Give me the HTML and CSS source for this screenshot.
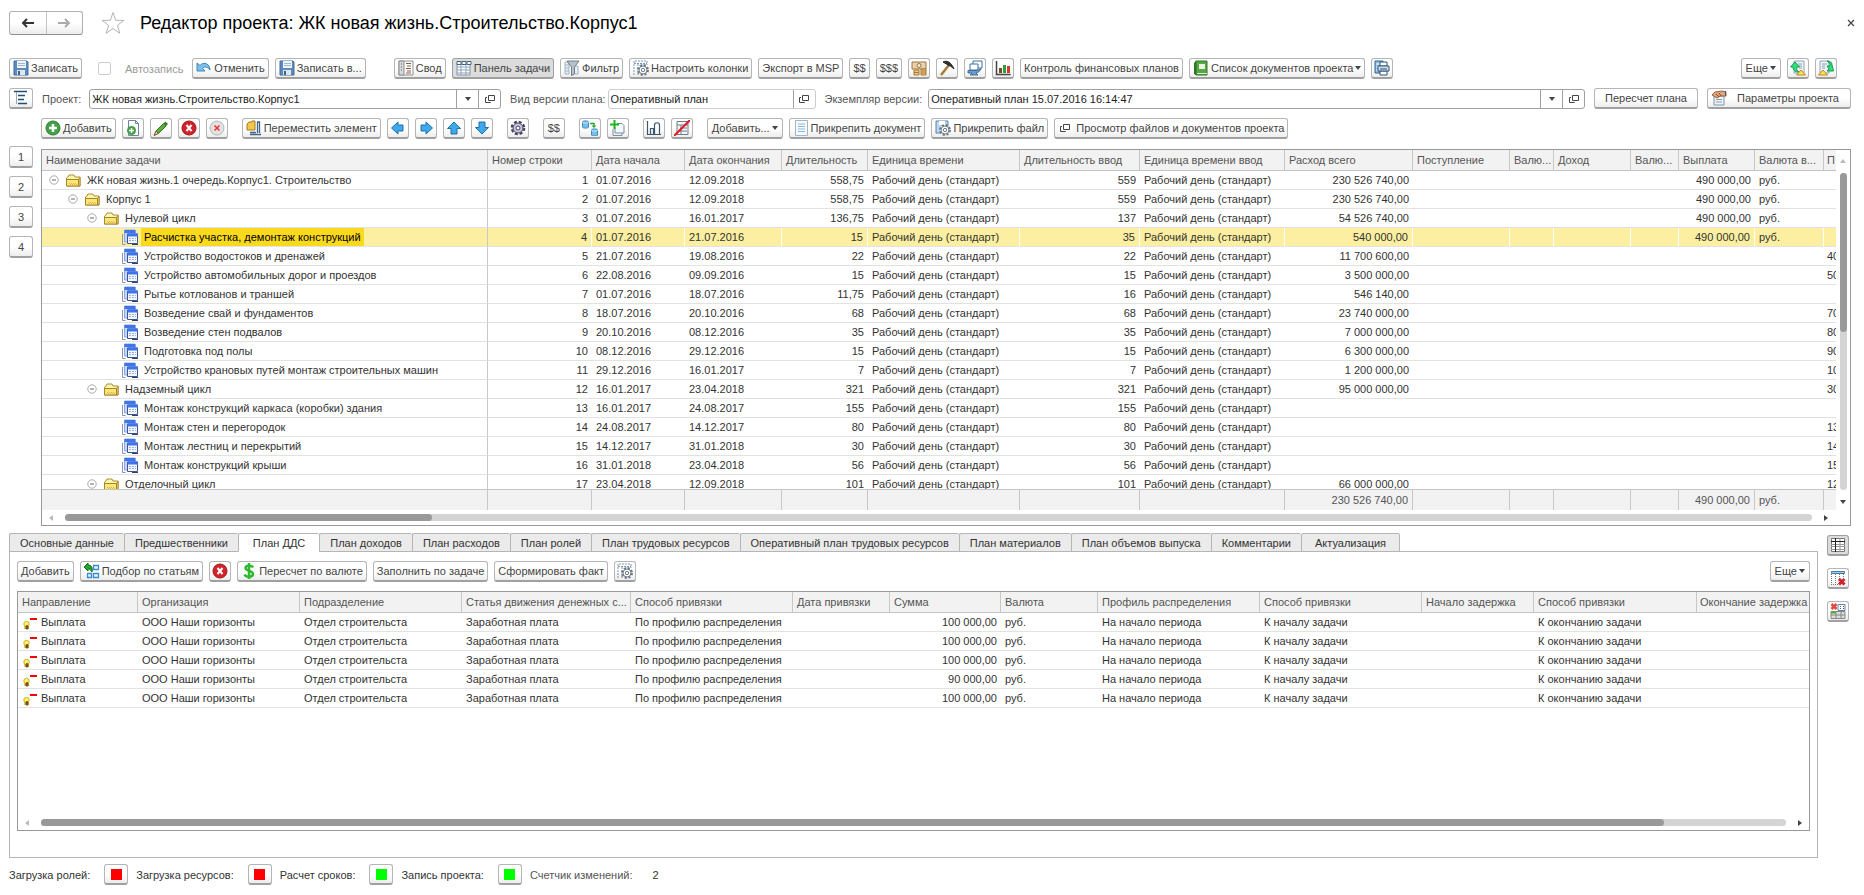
FILE: index.html
```html
<!DOCTYPE html>
<html lang="ru">
<head>
<meta charset="utf-8">
<title>Редактор проекта</title>
<link rel="stylesheet" href="styles.css">
</head>
<body>
<svg class="sprite" aria-hidden="true">
  <symbol id="save" viewBox="0 0 16 16"><path d="M1 1h13l1 1v13H1z" fill="#5d8bbd" stroke="#3f6c9c"/><path d="M4 1h9v7H4z" fill="#eef4fa"/><path d="M5 3.500h7M5 5.500h7" stroke="#9cb8d4"/><path d="M4 10h8v5H4z" fill="#dfe6ec"/><path d="M5 11h2v4H5z" fill="#36638f"/></symbol>
  <symbol id="undo" viewBox="0 0 16 16"><path d="M1 3v8h8L6.500 8.500C9 6 12 7 14 10 14 4 8 1 4 5.500z" fill="#7fbfe6" stroke="#3f86b8"/></symbol>
  <symbol id="summary" viewBox="0 0 16 16"><path d="M1 1h14v14H1z" fill="#fff" stroke="#8a8f94"/><path d="M1 1h5v14H1z" fill="#d4d9dd" stroke="#8a8f94"/><path d="M8 3.500h5M9 6h4M8 8.500h5M9 11h4M8 13h5M3 4h1M3 7h1M3 10h1" stroke="#8c5a3c"/></symbol>
  <symbol id="panel" viewBox="0 0 16 16"><path d="M1 4h13v11H1z" fill="#fff" stroke="#7e93a8"/><path d="M1 7h13M1 10h13M1 13h13M5 4v11M10 4v11" stroke="#91a5b8"/><path d="M1 1.500h4v3H1zM6 1.500h4v3H6zM11 1.500h4v3h-4z" fill="#fff" stroke="#3f6485"/></symbol>
  <symbol id="filter" viewBox="0 0 16 16"><path d="M1 2h4v12H1zM1 5h4M1 8h4M1 11h4M11 6h3v8h-3" fill="#e8f0f6" stroke="#9fb4c6"/><path d="M3 1h12L10.500 7v7l-3 1.500V7z" fill="#b9c1c8" stroke="#6f7f8d"/></symbol>
  <symbol id="columns" viewBox="0 0 16 16"><path d="M1 15V1h13v4M1 3.500h13M5 4v11M9 4v2" fill="none" stroke="#7d97b0" stroke-dasharray="2 1"/><circle cx="10" cy="10" r="5" fill="#fff" stroke="#6d7a86" stroke-width="2" stroke-dasharray="2.200 1.730"/><circle cx="10" cy="10" r="4" fill="#fff" stroke="#6d7a86"/><circle cx="10" cy="10" r="1.700" fill="none" stroke="#6d7a86"/></symbol>
  <symbol id="money" viewBox="0 0 16 16"><path d="M1 2h14v7H1z" fill="#ead0ac" stroke="#9c7443"/><circle cx="8" cy="5.500" r="2" fill="#f8ecd6" stroke="#9c7443"/><path d="M3 10h5v5H3zM10 9h5v6h-5z" fill="#efc878" stroke="#a67b36"/><path d="M3 12.500h5M10 11h5M10 13h5" stroke="#a67b36"/></symbol>
  <symbol id="hammer" viewBox="0 0 16 16"><path d="M2 15L10 5" stroke="#a97a36" stroke-width="2.500"/><path d="M4 2c4-2 8 0 11 7-3-3-4-3-6-4z" fill="#333" stroke="#222"/></symbol>
  <symbol id="windows" viewBox="0 0 16 16"><path d="M6 1h9v7H6z" fill="#fff" stroke="#3f6f9d"/><path d="M3 4h8v6H3z" fill="#fff" stroke="#3f6f9d"/><path d="M1 10.500h8c2 0 4-1 5-2-1 3-3 4-5 4.500L11 15H3l2-2H1z" fill="#6a9bc9" stroke="#3f6f9d"/></symbol>
  <symbol id="chart" viewBox="0 0 16 16"><path d="M1.500 1v13.500h14" fill="none" stroke="#444" stroke-width="1.500"/><path d="M4 8h3v5H4z" fill="#7a4a2a"/><path d="M8 5h3v8H8z" fill="#2f9e3b"/><path d="M12 6h3v7h-3z" fill="#d23c2a"/></symbol>
  <symbol id="book" viewBox="0 0 16 16"><path d="M3 1h11v14H3z" fill="#56a845" stroke="#2f7326"/><path d="M3 1v14l-2-1V3z" fill="#2f7326"/><path d="M6 4h6v5H6z" fill="#e9f4dd"/><path d="M4 13.500h10" stroke="#e0efd6"/></symbol>
  <symbol id="print" viewBox="0 0 16 16"><path d="M1 1h8v12H1z" fill="#8dbbe0" stroke="#2f6699"/><path d="M2 4h4M2 7h3M2 10h3" stroke="#fff"/><path d="M6 2h7v4H6zM6 11h7v4H6z" fill="#fff" stroke="#2f5478"/><path d="M4 6h11v5H4z" fill="#cfdeeb" stroke="#2f5478"/><path d="M6 9h7" stroke="#2f5478"/></symbol>
  <symbol id="docup" viewBox="0 0 16 16"><path d="M4 1h10v12H4z" fill="#eef3f7" stroke="#8fa3b5"/><path d="M8 4h4M9 6h3M9 8h3" stroke="#8fa3b5"/><path d="M5 2L0.500 7h2.500c0 4 3 5 6 5-2-1-3-3-2-5h2.500z" fill="#2ee07a" stroke="#1b9a50"/><path d="M11 10l4.500 5h-9z" fill="#ffe05a" stroke="#b98a1a"/></symbol>
  <symbol id="docdown" viewBox="0 0 16 16"><path d="M2 1h9v12H2z" fill="#eef3f7" stroke="#8fa3b5"/><path d="M4 4h5M4 6h3M4 8h3" stroke="#8fa3b5"/><path d="M9 1c3 0 5 1 5 4l1.500 6H9l2-2-2-3 3 0c0-2-1-4-3-5z" fill="#2ee07a" stroke="#1b9a50"/><path d="M5 10l4.500 5H.500z" fill="#ffe05a" stroke="#b98a1a"/></symbol>
  <symbol id="tree" viewBox="0 0 16 16"><path d="M1 1.500h13M5 5.500h7M5 9.500h6M5 13.500h9" stroke="#1f4e79" stroke-width="1.500"/><path d="M3.500 2v12" stroke="#9aa"/></symbol>
  <symbol id="params" viewBox="0 0 16 16"><path d="M3 6h10v9H3z" fill="#eef3f8" stroke="#7d96ad"/><path d="M5 9.500h6M5 12h6" stroke="#8aa0b5"/><path d="M1 5l3-3 7-1 4 1v4H9L6 8z" fill="#e0a57c" stroke="#9c623b"/><path d="M5 4l3 3M8 3l2 3" stroke="#8a4b26"/><path d="M14.500 1v5" stroke="#3a5f86"/></symbol>
  <symbol id="add" viewBox="0 0 16 16"><circle cx="8" cy="8" r="7" fill="#43a047" stroke="#2a7f30"/><path d="M8 4v8M4 8h8" stroke="#fff" stroke-width="2.500"/></symbol>
  <symbol id="docadd" viewBox="0 0 16 16"><path d="M3.500 .500h7l3 3v12h-10z" fill="#fff" stroke="#6f8498"/><path d="M10.500 .500v3h3" fill="none" stroke="#6f8498"/><circle cx="6.500" cy="10.500" r="4.500" fill="#43a047"/><path d="M6.500 8v5M4 10.500h5" stroke="#fff" stroke-width="1.500"/></symbol>
  <symbol id="pencil" viewBox="0 0 16 16"><path d="M3 11L10.500 3.500l2.500 2.500L5.500 13.500z" fill="#5fae3b" stroke="#376f20"/><path d="M3 11l-2 4.500L5.500 13.500z" fill="#f2d3a2" stroke="#6b5334"/><path d="M10.500 3.500l2-2 2.500 2.500-2 2z" fill="#3f7d2b"/></symbol>
  <symbol id="del" viewBox="0 0 16 16"><circle cx="8" cy="8" r="7" fill="#d2232a" stroke="#a11318"/><path d="M5.500 5l5 6M10.500 5l-5 6" stroke="#fff" stroke-width="2"/></symbol>
  <symbol id="delgray" viewBox="0 0 16 16"><circle cx="8" cy="8" r="7" fill="#e2e2e2" stroke="#b5b5b5"/><path d="M5.500 5.500l5 5M10.500 5.500l-5 5" stroke="#e33" stroke-width="1.500"/></symbol>
  <symbol id="move" viewBox="0 0 16 16"><path d="M1 4l2-2h3v-1h3v9H1z" fill="#f3c64e" stroke="#a77b1c"/><path d="M4 12.500h6M4 14.500h11M11.500 13V2h2v11" fill="none" stroke="#3f6488" stroke-width="1.300"/></symbol>
  <symbol id="left" viewBox="0 0 16 16"><path d="M1.500 8L8 2v3h5v6H8v3z" fill="#3fa9ec" stroke="#1d6fa8"/></symbol>
  <symbol id="right" viewBox="0 0 16 16"><path d="M14.500 8L8 2v3H3v6h5v3z" fill="#3fa9ec" stroke="#1d6fa8"/></symbol>
  <symbol id="up" viewBox="0 0 16 16"><path d="M8 2L14.500 8.500H11V14H5V8.500H1.500z" fill="#3fa9ec" stroke="#1d6fa8"/></symbol>
  <symbol id="down" viewBox="0 0 16 16"><path d="M8 14L1.500 7.500H5V2h6v5.500h3.500z" fill="#3fa9ec" stroke="#1d6fa8"/></symbol>
  <symbol id="gear" viewBox="0 0 16 16"><circle cx="8" cy="8" r="6.300" fill="none" stroke="#45415c" stroke-width="2" stroke-dasharray="3 1.950"/><circle cx="8" cy="8" r="5" fill="#c9c5e0" stroke="#45415c"/><circle cx="8" cy="8" r="2" fill="#fff" stroke="#45415c"/></symbol>
  <symbol id="db" viewBox="0 0 16 16"><path d="M.500 2c0-1.500 6-1.500 6 0v5c0 1.500-6 1.500-6 0zM9.500 10c0-1.500 6-1.500 6 0v5c0 1.300-6 1.300-6 0z" fill="#74bdec" stroke="#3b8bc4"/><path d="M.500 2c0 1.500 6 1.500 6 0M9.500 10c0 1.500 6 1.500 6 0" fill="none" stroke="#d6edfa"/><path d="M8 3.500h4v2" fill="none" stroke="#27a327" stroke-width="1.500"/><path d="M9.500 5.500h5L12 8z" fill="#27a327"/></symbol>
  <symbol id="copy" viewBox="0 0 16 16"><path d="M7 3.500h5l2 2V13H5V7" fill="#f4f8fb" stroke="#7690a8"/><path d="M3 9v6.500h9V13" fill="none" stroke="#7690a8"/><path d="M4.500 0v9M0 4.500h9" stroke="#1fb51f" stroke-width="2"/></symbol>
  <symbol id="scale" viewBox="0 0 16 16"><path d="M1.500 1v13.500H15M4.500 14V8.500h3V14M8.500 14V5c0-3 5-3 5 0v9M4 8.500h5" fill="none" stroke="#3b5673" stroke-width="1.200"/></symbol>
  <symbol id="noclip" viewBox="0 0 16 16"><path d="M3 1.500h11v13H3zM3 5h11M6 8h7M6 11h7M7 5v9" fill="#f5f7f9" stroke="#6c7f91"/><path d="M0 16L16 0" stroke="#e5161d" stroke-width="2"/></symbol>
  <symbol id="doc" viewBox="0 0 16 16"><path d="M2.500 .500h12v15h-12z" fill="#f6fafd" stroke="#9fb6ca"/><path d="M5 4h7M5 6.500h7M5 9h7M5 11.500h7" stroke="#8fb9d8"/></symbol>
  <symbol id="file" viewBox="0 0 16 16"><path d="M1 1h12v12H1z" fill="#bcd6ee" stroke="#5a84ac"/><path d="M4 1h6v4H4z" fill="#fff"/><circle cx="10" cy="10" r="5" fill="#fff" stroke="#6d7a86" stroke-width="2" stroke-dasharray="2.200 1.730"/><circle cx="10" cy="10" r="4" fill="#fff" stroke="#6d7a86"/><circle cx="10" cy="10" r="1.700" fill="none" stroke="#6d7a86"/></symbol>
  <symbol id="open" viewBox="0 0 10 10"><path d="M3.500 1.500h6v5h-6zM2 3.500H.500v5h5V8" fill="none" stroke="#444"/></symbol>
  <symbol id="pick" viewBox="0 0 16 16"><path d="M9.500 2.500h5v4h-5zM3.500 10.500h4v4h-4zM9.500 10.500h5v4h-5z" fill="#eaf5ff" stroke="#3b8bd0" stroke-width="1.300"/><path d="M4 0v2c3 0 5 2 4 7C6 6 5 6 4 6v2L0 4z" fill="#27a327" stroke="#14701a"/></symbol>
  <symbol id="dollar" viewBox="0 0 16 16"><path d="M12 4.500C11 2 4.500 2 4.500 5s7.500 2.500 7.500 6-7 3.500-8.500 .500M8 0v16" fill="none" stroke="#2fb82f" stroke-width="2.500"/></symbol>
  <symbol id="tablefix" viewBox="0 0 16 16"><path d="M1.500 1.500h13v13h-13z" fill="#fff" stroke="#777"/><path d="M1 7.500h14M1 9.500h14M1 12.500h14M10 1v14" stroke="#999"/><path d="M1 4.500h14M5.500 1v14" stroke="#222"/></symbol>
  <symbol id="tabledel" viewBox="0 0 16 16"><path d="M1.500 1.500h13v2h-13z" fill="#9cc8ee" stroke="#4d7ea9"/><path d="M1.500 4v11M5.500 4v11M9.500 4v6M13.500 4v4M1 14.500h8" stroke="#777" stroke-dasharray="1 1"/><path d="M9 9l5.500 5.500M14.500 9L9 14.500" stroke="#d2232a" stroke-width="3"/></symbol>
  <symbol id="panedel" viewBox="0 0 16 16"><path d="M8 1.500h7v6H8z" fill="#fff" stroke="#5f86ab"/><path d="M10 3.500h1M13 3.500h1M10 5.500h1M13 5.500h1" stroke="#555"/><path d="M1 8.500h14v7H1z" fill="#ddd" stroke="#888"/><path d="M1 12h14M6 9v6M11 9v6" stroke="#888"/><path d="M1 8.500h5v2H1z" fill="#4eae3b"/><path d="M1.500 1l5 5M6.500 1l-5 5" stroke="#e2483d" stroke-width="2.500"/></symbol>
  <symbol id="folder" viewBox="0 0 16 16"><path d="M1.500 14V6l1.500-1 1-2h5l1 2h5v9z" fill="#fdf6b0" stroke="#b08d33"/><path d="M1.500 7.500h12V14h-12zM13.500 7.500l1.500-2V14h-1.500" fill="#f9e878" stroke="#a8842a"/><path d="M4 11.500h7M5 12.500h7" stroke="#eeae4c" stroke-dasharray="1 1"/></symbol>
  <symbol id="task" viewBox="0 0 16 16"><path d="M.500 5v10.500h3" fill="none" stroke="#8a94b4"/><path d="M2.500 1h10.500v12H2.500z" fill="#c5d6fa" stroke="#8ba8e6"/><path d="M2.500 1h11v3h-11z" fill="#3e76ea"/><path d="M5.500 5h10v9.500h-10z" fill="#f2f6ff" stroke="#3c548f"/><path d="M5.500 4.500h10.500v3H5.500z" fill="#3f74e8"/><path d="M7 9.500h7M7 11.500h7" stroke="#9fb0d8" stroke-dasharray="2 1"/><path d="M10 15.500h6" stroke="#333f66"/></symbol>
  <symbol id="pay" viewBox="0 0 16 16"><path d="M8 5h7" stroke="#f00" stroke-width="2"/><circle cx="4.500" cy="10" r="2.700" fill="#fff07a" stroke="#d4b416"/><path d="M2.500 12h4.500v3H2.500z" fill="#b98b1e"/><path d="M5 11v4.500" stroke="#5d4310" stroke-width="1.500"/></symbol>
  <symbol id="minus" viewBox="0 0 10 10"><circle cx="5" cy="5" r="4.200" fill="#fff" stroke="#aaa"/><path d="M3 5h4" stroke="#666"/></symbol>
</svg>

<header class="head">
  <div class="nav"><button aria-label="Назад"><svg viewBox="0 0 14 10"><path d="M6 1L2 5l4 4M2 5h11" class="arw"/></svg></button><button aria-label="Вперед" class="off"><svg viewBox="0 0 14 10"><path d="M8 1l4 4-4 4M12 5H1" class="arw"/></svg></button></div>
  <svg class="star" viewBox="0 0 24 24"><path d="M12 1.500l2.700 7.800H23l-6.600 5 2.400 8L12 17.500l-6.800 4.800 2.400-8L1 9.300h8.300z" fill="#fff" stroke="#b4b4b4"/></svg>
  <h1>Редактор проекта: ЖК новая жизнь.Строительство.Корпус1</h1>
  <button class="close" aria-label="Закрыть"><svg viewBox="0 0 8 8"><path d="M1 1l6 6M7 1L1 7" stroke="#444" stroke-width="1.200"/></svg></button>
</header>

<div class="bar bar1">
  <button class="b"><svg><use href="#save"/></svg>Записать</button>
  <label class="auto"><input type="checkbox" disabled>Автозапись</label>
  <button class="b"><svg><use href="#undo"/></svg>Отменить</button>
  <button class="b"><svg><use href="#save"/></svg>Записать в...</button>
  <button class="b sep3"><svg><use href="#summary"/></svg>Свод</button>
  <button class="b on"><svg><use href="#panel"/></svg>Панель задачи</button>
  <button class="b"><svg><use href="#filter"/></svg>Фильтр</button>
  <button class="b"><svg><use href="#columns"/></svg>Настроить колонки</button>
  <button class="b">Экспорт в MSP</button>
  <button class="b">$$</button>
  <button class="b">$$$</button>
  <button class="b i" aria-label="Деньги"><svg><use href="#money"/></svg></button>
  <button class="b i" aria-label="Работы"><svg><use href="#hammer"/></svg></button>
  <button class="b i" aria-label="Окна"><svg><use href="#windows"/></svg></button>
  <button class="b i" aria-label="Диаграмма"><svg><use href="#chart"/></svg></button>
  <button class="b">Контроль финансовых планов</button>
  <button class="b"><svg><use href="#book"/></svg>Список документов проекта<i class="car"></i></button>
  <button class="b i" aria-label="Печать"><svg><use href="#print"/></svg></button>
  <span class="grow"></span>
  <button class="b more">Еще<i class="car"></i></button>
  <button class="b i" aria-label="Выгрузить"><svg><use href="#docup"/></svg></button>
  <button class="b i" aria-label="Загрузить"><svg><use href="#docdown"/></svg></button>
</div>

<div class="bar bar2">
  <button class="b i" aria-label="Дерево"><svg><use href="#tree"/></svg></button>
  <div class="pair p1"><label for="prj">Проект:</label>
  <div class="field"><input id="prj" value="ЖК новая жизнь.Строительство.Корпус1"><button aria-label="Выбрать"><i class="car"></i></button><button aria-label="Открыть"><svg><use href="#open"/></svg></button></div></div>
  <div class="pair p2"><label for="kind">Вид версии плана:</label>
  <div class="field"><input id="kind" value="Оперативный план"><button aria-label="Открыть"><svg><use href="#open"/></svg></button></div></div>
  <div class="pair p3"><label for="ver">Экземпляр версии:</label>
  <div class="field"><input id="ver" value="Оперативный план 15.07.2016 16:14:47"><button aria-label="Выбрать"><i class="car"></i></button><button aria-label="Открыть"><svg><use href="#open"/></svg></button></div></div>
  <button class="b wide1">Пересчет плана</button>
  <button class="b wide2"><svg><use href="#params"/></svg><span>Параметры проекта</span></button>
</div>

<div class="bar bar3">
  <button class="b"><svg><use href="#add"/></svg>Добавить</button>
  <button class="b i" aria-label="Создать"><svg><use href="#docadd"/></svg></button>
  <button class="b i" aria-label="Изменить"><svg><use href="#pencil"/></svg></button>
  <button class="b i" aria-label="Удалить"><svg><use href="#del"/></svg></button>
  <button class="b i" aria-label="Снять"><svg><use href="#delgray"/></svg></button>
  <button class="b sep1"><svg><use href="#move"/></svg>Переместить элемент</button>
  <button class="b i" aria-label="Влево"><svg><use href="#left"/></svg></button>
  <button class="b i" aria-label="Вправо"><svg><use href="#right"/></svg></button>
  <button class="b i" aria-label="Вверх"><svg><use href="#up"/></svg></button>
  <button class="b i" aria-label="Вниз"><svg><use href="#down"/></svg></button>
  <button class="b i sep1" aria-label="Настройки"><svg><use href="#gear"/></svg></button>
  <button class="b i sep1">$$</button>
  <button class="b i sep1" aria-label="Базы"><svg><use href="#db"/></svg></button>
  <button class="b i" aria-label="Копировать"><svg><use href="#copy"/></svg></button>
  <button class="b i sep1" aria-label="Масштаб"><svg><use href="#scale"/></svg></button>
  <button class="b i" aria-label="Отключить"><svg><use href="#noclip"/></svg></button>
  <button class="b sep1 more">Добавить...<i class="car"></i></button>
  <button class="b"><svg><use href="#doc"/></svg>Прикрепить документ</button>
  <button class="b"><svg><use href="#file"/></svg>Прикрепить файл</button>
  <button class="b"><svg class="sm"><use href="#open"/></svg>Просмотр файлов и документов проекта</button>
</div>

<section class="upper">
  <div class="levels"><button>1</button><button>2</button><button>3</button><button>4</button></div>
  <div class="grid">
    <div class="pane">
    <table class="t tasks">
      <colgroup><col class="c446"><col class="c104"><col class="c93"><col class="c97"><col class="c86"><col class="c152"><col class="c120"><col class="c145"><col class="c128"><col class="c97"><col class="c44"><col class="c77"><col class="c48"><col class="c76"><col class="c69"><col></colgroup>
      <thead><tr><th>Наименование задачи<th>Номер строки<th>Дата начала<th>Дата окончания<th>Длительность<th>Единица времени<th>Длительность ввод<th>Единица времени ввод<th>Расход всего<th>Поступление<th>Валю...<th>Доход<th>Валю...<th>Выплата<th>Валюта в...<th>П</tr></thead>
      <tbody>
      <tr><td class="l0"><svg class="mi"><use href="#minus"/></svg><svg><use href="#folder"/></svg><span>ЖК новая жизнь.1 очередь.Корпус1. Строительство</span><td>1<td>01.07.2016<td>12.09.2018<td>558,75<td>Рабочий день (стандарт)<td>559<td>Рабочий день (стандарт)<td>230 526 740,00<td><td><td><td><td>490 000,00<td>руб.<td></tr>
      <tr><td class="l1"><svg class="mi"><use href="#minus"/></svg><svg><use href="#folder"/></svg><span>Корпус 1</span><td>2<td>01.07.2016<td>12.09.2018<td>558,75<td>Рабочий день (стандарт)<td>559<td>Рабочий день (стандарт)<td>230 526 740,00<td><td><td><td><td>490 000,00<td>руб.<td></tr>
      <tr><td class="l2"><svg class="mi"><use href="#minus"/></svg><svg><use href="#folder"/></svg><span>Нулевой цикл</span><td>3<td>01.07.2016<td>16.01.2017<td>136,75<td>Рабочий день (стандарт)<td>137<td>Рабочий день (стандарт)<td>54 526 740,00<td><td><td><td><td>490 000,00<td>руб.<td></tr>
      <tr class="sel"><td class="l3"><svg><use href="#task"/></svg><span>Расчистка участка, демонтаж конструкций</span><td>4<td>01.07.2016<td>21.07.2016<td>15<td>Рабочий день (стандарт)<td>35<td>Рабочий день (стандарт)<td>540 000,00<td><td><td><td><td>490 000,00<td>руб.<td></tr>
      <tr><td class="l3"><svg><use href="#task"/></svg><span>Устройство водостоков и дренажей</span><td>5<td>21.07.2016<td>19.08.2016<td>22<td>Рабочий день (стандарт)<td>22<td>Рабочий день (стандарт)<td>11 700 600,00<td><td><td><td><td><td><td>40</tr>
      <tr><td class="l3"><svg><use href="#task"/></svg><span>Устройство автомобильных дорог и проездов</span><td>6<td>22.08.2016<td>09.09.2016<td>15<td>Рабочий день (стандарт)<td>15<td>Рабочий день (стандарт)<td>3 500 000,00<td><td><td><td><td><td><td>50</tr>
      <tr><td class="l3"><svg><use href="#task"/></svg><span>Рытье котлованов и траншей</span><td>7<td>01.07.2016<td>18.07.2016<td>11,75<td>Рабочий день (стандарт)<td>16<td>Рабочий день (стандарт)<td>546 140,00<td><td><td><td><td><td><td></tr>
      <tr><td class="l3"><svg><use href="#task"/></svg><span>Возведение свай и фундаментов</span><td>8<td>18.07.2016<td>20.10.2016<td>68<td>Рабочий день (стандарт)<td>68<td>Рабочий день (стандарт)<td>23 740 000,00<td><td><td><td><td><td><td>70</tr>
      <tr><td class="l3"><svg><use href="#task"/></svg><span>Возведение стен подвалов</span><td>9<td>20.10.2016<td>08.12.2016<td>35<td>Рабочий день (стандарт)<td>35<td>Рабочий день (стандарт)<td>7 000 000,00<td><td><td><td><td><td><td>80</tr>
      <tr><td class="l3"><svg><use href="#task"/></svg><span>Подготовка под полы</span><td>10<td>08.12.2016<td>29.12.2016<td>15<td>Рабочий день (стандарт)<td>15<td>Рабочий день (стандарт)<td>6 300 000,00<td><td><td><td><td><td><td>90</tr>
      <tr><td class="l3"><svg><use href="#task"/></svg><span>Устройство крановых путей монтаж строительных машин</span><td>11<td>29.12.2016<td>16.01.2017<td>7<td>Рабочий день (стандарт)<td>7<td>Рабочий день (стандарт)<td>1 200 000,00<td><td><td><td><td><td><td>10</tr>
      <tr><td class="l2"><svg class="mi"><use href="#minus"/></svg><svg><use href="#folder"/></svg><span>Надземный цикл</span><td>12<td>16.01.2017<td>23.04.2018<td>321<td>Рабочий день (стандарт)<td>321<td>Рабочий день (стандарт)<td>95 000 000,00<td><td><td><td><td><td><td>30</tr>
      <tr><td class="l3"><svg><use href="#task"/></svg><span>Монтаж конструкций каркаса (коробки) здания</span><td>13<td>16.01.2017<td>24.08.2017<td>155<td>Рабочий день (стандарт)<td>155<td>Рабочий день (стандарт)<td><td><td><td><td><td><td><td></tr>
      <tr><td class="l3"><svg><use href="#task"/></svg><span>Монтаж стен и перегородок</span><td>14<td>24.08.2017<td>14.12.2017<td>80<td>Рабочий день (стандарт)<td>80<td>Рабочий день (стандарт)<td><td><td><td><td><td><td><td>13</tr>
      <tr><td class="l3"><svg><use href="#task"/></svg><span>Монтаж лестниц и перекрытий</span><td>15<td>14.12.2017<td>31.01.2018<td>30<td>Рабочий день (стандарт)<td>30<td>Рабочий день (стандарт)<td><td><td><td><td><td><td><td>14</tr>
      <tr><td class="l3"><svg><use href="#task"/></svg><span>Монтаж конструкций крыши</span><td>16<td>31.01.2018<td>23.04.2018<td>56<td>Рабочий день (стандарт)<td>56<td>Рабочий день (стандарт)<td><td><td><td><td><td><td><td>15</tr>
      <tr><td class="l2"><svg class="mi"><use href="#minus"/></svg><svg><use href="#folder"/></svg><span>Отделочный цикл</span><td>17<td>23.04.2018<td>12.09.2018<td>101<td>Рабочий день (стандарт)<td>101<td>Рабочий день (стандарт)<td>66 000 000,00<td><td><td><td><td><td><td>12</tr>
      </tbody>
      <tfoot><tr><td><td><td><td><td><td><td><td><td>230 526 740,00<td><td><td><td><td>490 000,00<td>руб.<td></tr></tfoot>
    </table>
    </div>
    <div class="vs"><i class="ar u"></i><div class="track"><div class="thumb"></div></div><i class="ar d"></i></div>
    <div class="hs"><i class="ar l"></i><div class="track"><div class="thumb short"></div></div><i class="ar r"></i></div>
  </div>
</section>

<section class="lower">
  <div class="tabbox">
    <nav class="tabs"><button>Основные данные</button><button>Предшественники</button><button class="cur">План ДДС</button><button>План доходов</button><button>План расходов</button><button>План ролей</button><button>План трудовых ресурсов</button><button>Оперативный план трудовых ресурсов</button><button>План материалов</button><button>План объемов выпуска</button><button>Комментарии</button><button>Актуализация</button></nav>
    <div class="panel">
      <div class="bar">
        <button class="b">Добавить</button>
        <button class="b"><svg><use href="#pick"/></svg>Подбор по статьям</button>
        <button class="b i" aria-label="Удалить"><svg><use href="#del"/></svg></button>
        <button class="b"><svg><use href="#dollar"/></svg>Пересчет по валюте</button>
        <button class="b">Заполнить по задаче</button>
        <button class="b">Сформировать факт</button>
        <button class="b i" aria-label="Настроить"><svg><use href="#columns"/></svg></button>
        <span class="grow"></span>
        <button class="b more">Еще<i class="car"></i></button>
      </div>
      <div class="grid2">
        <div class="pane">
        <table class="t dds">
          <colgroup><col class="c120"><col class="c162"><col class="c162"><col class="c169"><col class="c162"><col class="c97"><col class="c111"><col class="c97"><col class="c162"><col class="c162"><col class="c112"><col class="c163"><col></colgroup>
          <thead><tr><th>Направление<th>Организация<th>Подразделение<th>Статья движения денежных с...<th>Способ привязки<th>Дата привязки<th>Сумма<th>Валюта<th>Профиль распределения<th>Способ привязки<th>Начало задержка<th>Способ привязки<th>Окончание задержка</tr></thead>
          <tbody>
          <tr><td><svg><use href="#pay"/></svg><span>Выплата</span><td>ООО Наши горизонты<td>Отдел строительста<td>Заработная плата<td>По профилю распределения<td><td>100 000,00<td>руб.<td>На начало периода<td>К началу задачи<td><td>К окончанию задачи<td></tr>
          <tr><td><svg><use href="#pay"/></svg><span>Выплата</span><td>ООО Наши горизонты<td>Отдел строительста<td>Заработная плата<td>По профилю распределения<td><td>100 000,00<td>руб.<td>На начало периода<td>К началу задачи<td><td>К окончанию задачи<td></tr>
          <tr><td><svg><use href="#pay"/></svg><span>Выплата</span><td>ООО Наши горизонты<td>Отдел строительста<td>Заработная плата<td>По профилю распределения<td><td>100 000,00<td>руб.<td>На начало периода<td>К началу задачи<td><td>К окончанию задачи<td></tr>
          <tr><td><svg><use href="#pay"/></svg><span>Выплата</span><td>ООО Наши горизонты<td>Отдел строительста<td>Заработная плата<td>По профилю распределения<td><td>90 000,00<td>руб.<td>На начало периода<td>К началу задачи<td><td>К окончанию задачи<td></tr>
          <tr><td><svg><use href="#pay"/></svg><span>Выплата</span><td>ООО Наши горизонты<td>Отдел строительста<td>Заработная плата<td>По профилю распределения<td><td>100 000,00<td>руб.<td>На начало периода<td>К началу задачи<td><td>К окончанию задачи<td></tr>
          </tbody>
        </table>
        </div>
        <div class="hs"><i class="ar l"></i><div class="track"><div class="thumb long"></div></div><i class="ar r"></i></div>
      </div>
    </div>
  </div>
  <div class="side">
    <button class="b i on" aria-label="Закрепить"><svg><use href="#tablefix"/></svg></button>
    <button class="b i" aria-label="Очистить"><svg><use href="#tabledel"/></svg></button>
    <button class="b i" aria-label="Убрать панель"><svg><use href="#panedel"/></svg></button>
  </div>
</section>

<footer class="status">
  <span>Загрузка ролей:</span><button class="b i" aria-label="Загрузка ролей"><i class="led red"></i></button>
  <span>Загрузка ресурсов:</span><button class="b i" aria-label="Загрузка ресурсов"><i class="led red"></i></button>
  <span>Расчет сроков:</span><button class="b i" aria-label="Расчет сроков"><i class="led green"></i></button>
  <span>Запись проекта:</span><button class="b i" aria-label="Запись проекта"><i class="led green"></i></button>
  <span class="dim">Счетчик изменений:</span><output>2</output>
</footer>
</body>
</html>
```
FILE: styles.css
```css
* { box-sizing: border-box; }
body {
  margin: 0;
  height: 100vh;
  padding: 10px 13px 10px 9px;
  display: flex;
  flex-direction: column;
  background: #fff;
  color: #333;
  font: 11px/14px "Liberation Sans", Arial, sans-serif;
  overflow: hidden;
}
button, input { font: inherit; color: inherit; margin: 0; }
button { padding: 0; border: 0; background: none; }
svg { width: 16px; height: 16px; flex: none; }
.sprite { position: absolute; width: 0; height: 0; }
.grow { flex: 1; }

.head { display: flex; align-items: center; height: 26px; flex: none; }
.nav { display: flex; width: 74px; height: 24px; border: 1px solid #b0b0b0; border-bottom-color: #8f8f8f; border-radius: 3px; background: linear-gradient(#fff 50%, #ececec); }
.nav button { flex: 1; display: flex; align-items: center; justify-content: center; }
.nav button + button { border-left: 1px solid #c4c4c4; }
.nav svg { width: 14px; height: 10px; }
.arw { fill: none; stroke: #333; stroke-width: 2; }
.off .arw { stroke: #aaa; }
.star { width: 24px; height: 24px; margin-left: 18px; }
h1 { margin: 0 0 0 15px; font-size: 18px; line-height: 24px; font-weight: 400; color: #000; flex: 1; }
.close { width: 16px; height: 16px; margin-right: -8px; display: flex; align-items: center; justify-content: center; }
.close svg { width: 8px; height: 8px; }

.bar { display: flex; align-items: center; gap: 6px; height: 21px; flex: none; }
.bar1 { margin-top: 22px; padding-right: 14px; }
.bar2 { margin-top: 9px; gap: 9px; }
.bar3 { margin: 9px 0 7px 32px; }
.b {
  display: inline-flex; align-items: center; justify-content: center; gap: 2px;
  height: 21px; padding: 0 3px; flex: none; white-space: nowrap;
  border: 1px solid #b5b5b5; border-bottom: 2px solid #a0a0a0; border-radius: 3px;
  background: linear-gradient(#fff 50%, #ededed); color: #444;
}
.b.i { width: 22px; padding: 0; }
.b.on { background: #dcdcdc; border-color: #a0a0a0; }
.more { padding: 0 4px; }
.sm { width: 10px; height: 10px; margin: 0 4px 0 2px; }
.sep1 { margin-left: 8px; }
.sep3 { margin-left: 22px; }
.car { width: 0; height: 0; border: 3px solid transparent; border-top: 4px solid #444; border-bottom: 0; }
.auto { display: flex; align-items: center; gap: 14px; margin: 0 3px 0 10px; color: #9a9a9a; }
.auto input { appearance: none; width: 13px; height: 13px; margin: 0; border: 1px solid #ccc; border-radius: 2px; }

.bar2 .i { width: 24px; }
.bar2 label { color: #555; white-space: nowrap; }
.pair { display: flex; align-items: center; min-width: 0; }
.p1 { flex: 460 1 0; gap: 8px; }
.p2 { flex: 306 1 0; gap: 2px; }
.p3 { flex: 762 1 0; gap: 6px; }
.field { flex: 1; min-width: 0; display: flex; height: 20px; border: 1px solid #a0a0a0; border-radius: 3px; }
.p2 .field { border-color: #ccc; }
.field input { flex: 1; min-width: 0; border: 0; padding: 0 2px; background: none; outline: 0; color: #222; }
.field button { width: 22px; border-left: 1px solid #a0a0a0; display: flex; align-items: center; justify-content: center; }
.field svg { width: 10px; height: 10px; }
.wide1 { width: 104px; }
.wide2 { width: 144px; }
.wide2 span { flex: 1; }

.upper { display: flex; flex: 380 1 0; min-height: 0; }
.levels { width: 32px; display: flex; flex-direction: column; gap: 8px; }
.levels button { width: 24px; height: 22px; border: 1px solid #b5b5b5; border-bottom: 2px solid #a0a0a0; border-radius: 3px; background: linear-gradient(#fff 50%, #ededed); color: #444; }
.grid { flex: 1; min-width: 0; display: grid; grid-template: minmax(0, 1fr) 15px / minmax(0, 1fr) 14px; border: 1px solid #999; margin-top: 3px; }
.pane { overflow: hidden; min-height: 0; }
.hs { display: flex; align-items: center; gap: 12px; padding: 0 7px; grid-column: 1 / -1; height: 15px; }
.track { flex: 1; background: #d4d4d4; border-radius: 4px; height: 7px; }
.thumb { background: #999; border-radius: 4px; height: 7px; }
.short { width: 21%; }
.long { width: 93%; }
.vs { display: flex; flex-direction: column; align-items: center; gap: 10px; padding: 9px 0 6px; }
.vs .track { width: 7px; }
.vs .thumb { width: 7px; height: 50%; }
.ar { width: 0; height: 0; border: 3px solid transparent; }
.ar.u { border-top: 0; border-bottom: 4px solid #bbb; }
.ar.d { border-bottom: 0; border-top: 4px solid #444; }
.ar.l { border-left: 0; border-right: 4px solid #bbb; }
.ar.r { border-right: 0; border-left: 4px solid #444; }
.grid .hs { padding-right: 22px; }

.t { width: 100%; table-layout: fixed; border-collapse: separate; border-spacing: 0; }
.t th, .t td { padding: 0 4px; text-align: left; font-weight: 400; white-space: nowrap; overflow: hidden; }
.t th { height: 21px; padding-right: 0; background: #f2f2f2; color: #555; border-bottom: 1px solid #c4c4c4; border-right: 1px solid #c8c8c8; }
.t td { height: 19px; border-bottom: 1px solid #e2e2e2; }
.t th:last-child, .t td:last-child { border-right: 0; padding-right: 0; padding-left: 3px; }
.t svg { vertical-align: middle; }
.tasks td:nth-child(1) { border-right: 1px solid #c8c8c8; }
.tasks td:nth-child(2), .tasks td:nth-child(5), .tasks td:nth-child(7), .tasks td:nth-child(9), .tasks td:nth-child(14), .dds td:nth-child(7) { text-align: right; }
.t td > span { display: inline-block; height: 18px; line-height: 18px; padding: 0 3px; vertical-align: middle; }
.tasks .mi { width: 10px; height: 10px; margin-right: 6px; }
.tasks td svg + span { margin-left: 3px; }
.tasks td.l0 { padding-left: 7px; }
.tasks td.l1 { padding-left: 26px; }
.tasks td.l2 { padding-left: 45px; }
.tasks td.l3 { padding-left: 80px; }
.sel td { background: #fcefa1; border-right: 1px solid #fff; }
.sel td > span { background: #fbd91d; color: #000; }
.tasks tfoot td { position: sticky; bottom: 0; height: 21px; background: #f2f2f2; border-top: 1px solid #c4c4c4; border-bottom: 0; border-right: 1px solid #c8c8c8; color: #555; }
.c44 { width: 44px; } .c48 { width: 48px; } .c69 { width: 69px; } .c76 { width: 76px; } .c77 { width: 77px; }
.c86 { width: 86px; } .c93 { width: 93px; } .c97 { width: 97px; } .c104 { width: 104px; } .c111 { width: 111px; }
.c112 { width: 112px; } .c120 { width: 120px; } .c128 { width: 128px; } .c145 { width: 145px; } .c152 { width: 152px; }
.c162 { width: 162px; } .c163 { width: 163px; } .c169 { width: 169px; } .c446 { width: 446px; }

.lower { display: flex; gap: 9px; flex: 325 1 0; min-height: 0; margin-top: 7px; }
.tabbox { flex: 1; min-width: 0; display: flex; flex-direction: column; }
.tabs { position: relative; z-index: 1; display: flex; height: 19px; flex: none; }
.tabs button { padding: 0 10px; height: 19px; border: 1px solid #b5b5b5; border-right: 0; background: #ebebeb; border-radius: 2px 2px 0 0; white-space: nowrap; }
.tabs button:last-child { padding: 0 13px; border-right: 1px solid #b5b5b5; }
.tabs .cur { padding: 0 14px; background: #fff; border-bottom-color: #fff; }
.panel { flex: 1; min-height: 0; margin-top: -1px; padding: 9px 7px 26px; border: 1px solid #b5b5b5; display: flex; flex-direction: column; gap: 9px; }
.grid2 { flex: 1; min-height: 0; border: 1px solid #999; display: flex; flex-direction: column; }
.grid2 .pane { flex: 1; }
.side { width: 22px; padding-top: 2px; margin-right: 2px; display: flex; flex-direction: column; gap: 12px; }

.status { display: flex; align-items: center; height: 21px; margin-top: 6px; flex: none; gap: 8px; }
.status .b { width: 24px; margin-left: 6px; }
.status .dim { color: #555; }
.status output { margin-left: 12px; }
.led { width: 11px; height: 11px; }
.red { background: #f00; }
.green { background: #0f0; }
```
